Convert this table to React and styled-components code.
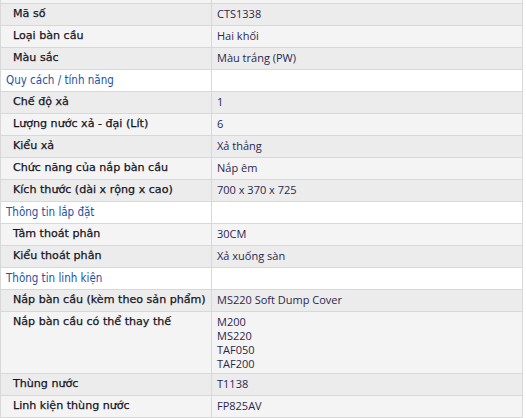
import React from "react";
import styled, { createGlobalStyle } from "styled-components";

const Global = createGlobalStyle`
  html, body { margin: 0; padding: 0; background: #ffffff; }
  body { width: 526px; height: 418px; overflow: hidden; }
`;

const Viewport = styled.div`
  width: 526px;
  height: 418px;
  overflow: hidden;
`;

const Table = styled.table`
  border-collapse: collapse;
  width: 523px;
  table-layout: fixed;
  margin-top: -19px;
  font-size: 12px;
`;

const shades = { dark: "#ececec", light: "#f4f4f4", white: "#ffffff" };

const Row = styled.tr`
  background: ${(p) => shades[p.$shade] || "#ffffff"};
`;

const Label = styled.td`
  width: 211px;
  box-sizing: border-box;
  border: 1px solid #d8d8d8;
  padding: 3px 5px 4px 12px;
  line-height: 14px;
  vertical-align: top;
  font-family: "DejaVu Sans", sans-serif;
  font-size: 11.1px;
  color: #14141f;
  -webkit-text-stroke: 0.25px #14141f;
  white-space: nowrap;
`;

const Section = styled(Label)`
  padding-left: 5px;
  font-family: "DejaVu Sans Condensed", "DejaVu Sans", sans-serif;
  font-size: 11.5px;
  color: #2452a6;
  -webkit-text-stroke: 0;
`;

const Value = styled.td`
  border: 1px solid #d8d8d8;
  padding: 3px 5px ${(p) => (p.$multi ? "2px" : "4px")} 5px;
  line-height: 14px;
  vertical-align: top;
  font-family: "Open Sans", "Noto Sans", sans-serif;
  font-size: 11px;
  color: #2a2752;
  white-space: nowrap;
`;

const Lines = styled.div`
  display: flex;
  flex-direction: column;
`;

const rows = [
  { shade: "light", label: "", value: "" },
  { shade: "dark", label: "Mã số", value: "CTS1338" },
  { shade: "light", label: "Loại bàn cầu", value: "Hai khối" },
  { shade: "dark", label: "Màu sắc", value: "Màu trắng (PW)" },
  { shade: "white", section: true, label: "Quy cách / tính năng", value: "" },
  { shade: "dark", label: "Chế độ xả", value: "1" },
  { shade: "light", label: "Lượng nước xả - đại (Lít)", value: "6" },
  { shade: "dark", label: "Kiểu xả", value: "Xả thẳng" },
  { shade: "light", label: "Chức năng của nắp bàn cầu", value: "Nắp êm" },
  { shade: "dark", label: "Kích thước (dài x rộng x cao)", value: "700 x 370 x 725" },
  { shade: "white", section: true, label: "Thông tin lắp đặt", value: "" },
  { shade: "light", label: "Tâm thoát phân", value: "30CM" },
  { shade: "dark", label: "Kiểu thoát phân", value: "Xả xuống sàn" },
  { shade: "white", section: true, label: "Thông tin linh kiện", value: "" },
  { shade: "dark", label: "Nắp bàn cầu (kèm theo sản phẩm)", value: "MS220 Soft Dump Cover" },
  { shade: "light", label: "Nắp bàn cầu có thể thay thế", value: ["M200", "MS220", "TAF050", "TAF200"] },
  { shade: "dark", label: "Thùng nước", value: "T1138" },
  { shade: "light", label: "Linh kiện thùng nước", value: "FP825AV" },
];

export default function App() {
  return (
    <Viewport>
      <Global />
      <Table>
        <tbody>
          {rows.map((r, i) => {
            const multi = Array.isArray(r.value);
            return (
              <Row key={i} $shade={r.shade}>
                {r.section ? <Section>{r.label}</Section> : <Label>{r.label || "\u00a0"}</Label>}
                <Value $multi={multi}>
                  {multi ? (
                    <Lines>
                      {r.value.map((v) => (
                        <span key={v}>{v}</span>
                      ))}
                    </Lines>
                  ) : (
                    r.value || "\u00a0"
                  )}
                </Value>
              </Row>
            );
          })}
        </tbody>
      </Table>
    </Viewport>
  );
}
